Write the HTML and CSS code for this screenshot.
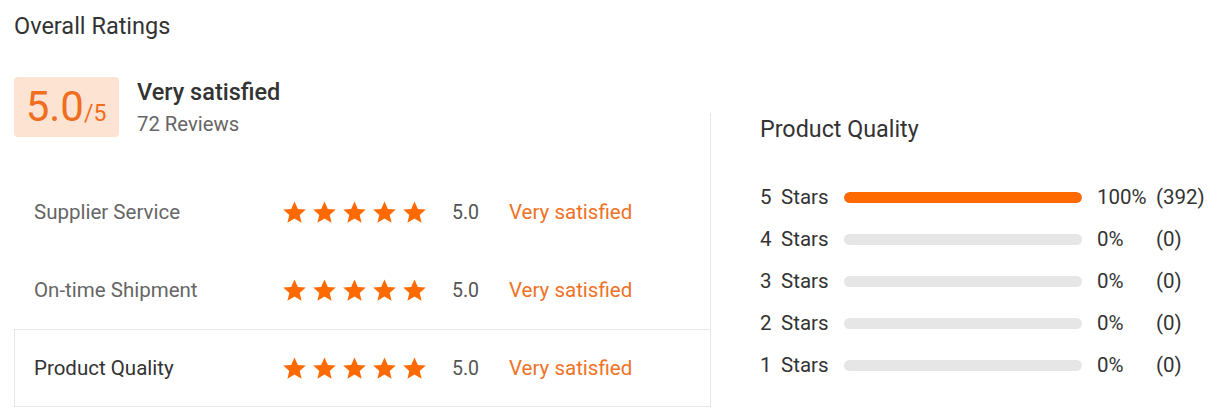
FILE: index.html
```html
<!DOCTYPE html>
<html lang="en">
<head>
    <meta charset="UTF-8">
    <title>Overall Ratings</title>
    <link rel="stylesheet" href="styles.css">
</head>
<body>
    <h2 class="title">Overall Ratings</h2>

    <div class="ratings">
        <div class="left">
            <div class="summary">
                <div class="score"><span class="big">5.0</span><span class="small">/5</span></div>
                <div class="summary-text">
                    <div class="verdict">Very satisfied</div>
                    <div class="reviews">72 Reviews</div>
                </div>
            </div>

            <div class="row">
                <span class="label">Supplier Service</span>
                <span class="stars">
                    <svg viewBox="0 0 24 24"><path d="M12 1.5l3.2 7.2 7.6.5-5.8 5.1 1.8 7.5L12 17.8l-6.8 4 1.8-7.5-5.8-5.1 7.6-.5z"/></svg>
                    <svg viewBox="0 0 24 24"><path d="M12 1.5l3.2 7.2 7.6.5-5.8 5.1 1.8 7.5L12 17.8l-6.8 4 1.8-7.5-5.8-5.1 7.6-.5z"/></svg>
                    <svg viewBox="0 0 24 24"><path d="M12 1.5l3.2 7.2 7.6.5-5.8 5.1 1.8 7.5L12 17.8l-6.8 4 1.8-7.5-5.8-5.1 7.6-.5z"/></svg>
                    <svg viewBox="0 0 24 24"><path d="M12 1.5l3.2 7.2 7.6.5-5.8 5.1 1.8 7.5L12 17.8l-6.8 4 1.8-7.5-5.8-5.1 7.6-.5z"/></svg>
                    <svg viewBox="0 0 24 24"><path d="M12 1.5l3.2 7.2 7.6.5-5.8 5.1 1.8 7.5L12 17.8l-6.8 4 1.8-7.5-5.8-5.1 7.6-.5z"/></svg>
                </span>
                <span class="num">5.0</span>
                <span class="word">Very satisfied</span>
            </div>
            <div class="row">
                <span class="label">On-time Shipment</span>
                <span class="stars">
                    <svg viewBox="0 0 24 24"><path d="M12 1.5l3.2 7.2 7.6.5-5.8 5.1 1.8 7.5L12 17.8l-6.8 4 1.8-7.5-5.8-5.1 7.6-.5z"/></svg>
                    <svg viewBox="0 0 24 24"><path d="M12 1.5l3.2 7.2 7.6.5-5.8 5.1 1.8 7.5L12 17.8l-6.8 4 1.8-7.5-5.8-5.1 7.6-.5z"/></svg>
                    <svg viewBox="0 0 24 24"><path d="M12 1.5l3.2 7.2 7.6.5-5.8 5.1 1.8 7.5L12 17.8l-6.8 4 1.8-7.5-5.8-5.1 7.6-.5z"/></svg>
                    <svg viewBox="0 0 24 24"><path d="M12 1.5l3.2 7.2 7.6.5-5.8 5.1 1.8 7.5L12 17.8l-6.8 4 1.8-7.5-5.8-5.1 7.6-.5z"/></svg>
                    <svg viewBox="0 0 24 24"><path d="M12 1.5l3.2 7.2 7.6.5-5.8 5.1 1.8 7.5L12 17.8l-6.8 4 1.8-7.5-5.8-5.1 7.6-.5z"/></svg>
                </span>
                <span class="num">5.0</span>
                <span class="word">Very satisfied</span>
            </div>
            <div class="row active">
                <span class="label">Product Quality</span>
                <span class="stars">
                    <svg viewBox="0 0 24 24"><path d="M12 1.5l3.2 7.2 7.6.5-5.8 5.1 1.8 7.5L12 17.8l-6.8 4 1.8-7.5-5.8-5.1 7.6-.5z"/></svg>
                    <svg viewBox="0 0 24 24"><path d="M12 1.5l3.2 7.2 7.6.5-5.8 5.1 1.8 7.5L12 17.8l-6.8 4 1.8-7.5-5.8-5.1 7.6-.5z"/></svg>
                    <svg viewBox="0 0 24 24"><path d="M12 1.5l3.2 7.2 7.6.5-5.8 5.1 1.8 7.5L12 17.8l-6.8 4 1.8-7.5-5.8-5.1 7.6-.5z"/></svg>
                    <svg viewBox="0 0 24 24"><path d="M12 1.5l3.2 7.2 7.6.5-5.8 5.1 1.8 7.5L12 17.8l-6.8 4 1.8-7.5-5.8-5.1 7.6-.5z"/></svg>
                    <svg viewBox="0 0 24 24"><path d="M12 1.5l3.2 7.2 7.6.5-5.8 5.1 1.8 7.5L12 17.8l-6.8 4 1.8-7.5-5.8-5.1 7.6-.5z"/></svg>
                </span>
                <span class="num">5.0</span>
                <span class="word">Very satisfied</span>
            </div>
        </div>

        <div class="right">
            <h3 class="sub">Product Quality</h3>
            <div class="dist">
                <span class="n">5</span><span class="st">Stars</span>
                <span class="bar"><span class="fill" style="width:100%"></span></span>
                <span class="pct">100%</span><span class="cnt">(392)</span>
            </div>
            <div class="dist">
                <span class="n">4</span><span class="st">Stars</span>
                <span class="bar"><span class="fill" style="width:0%"></span></span>
                <span class="pct">0%</span><span class="cnt">(0)</span>
            </div>
            <div class="dist">
                <span class="n">3</span><span class="st">Stars</span>
                <span class="bar"><span class="fill" style="width:0%"></span></span>
                <span class="pct">0%</span><span class="cnt">(0)</span>
            </div>
            <div class="dist">
                <span class="n">2</span><span class="st">Stars</span>
                <span class="bar"><span class="fill" style="width:0%"></span></span>
                <span class="pct">0%</span><span class="cnt">(0)</span>
            </div>
            <div class="dist">
                <span class="n">1</span><span class="st">Stars</span>
                <span class="bar"><span class="fill" style="width:0%"></span></span>
                <span class="pct">0%</span><span class="cnt">(0)</span>
            </div>
        </div>
    </div>
</body>
</html>
```

FILE: styles.css
```css
body {
    font-family: Roboto, "Liberation Sans", sans-serif;
    margin: 0;
    padding: 0 14px;
    background-color: #fff;
    color: #333;
}
.title {
    font-size: 23.5px;
    font-weight: normal;
    margin: 0;
    padding-top: 12px;
    line-height: 28px;
    color: #333;
}
.ratings {
    display: flex;
    margin-top: 37px;
}
.left {
    width: 697px;
    flex-shrink: 0;
}
.summary {
    display: flex;
    align-items: flex-start;
    height: 60px;
    margin-bottom: 36px;
}
.score {
    width: 105px;
    height: 60px;
    background-color: #fde3d1;
    border-radius: 4px;
    color: #ef6e1f;
    display: flex;
    align-items: baseline;
    justify-content: center;
    line-height: 60px;
    box-sizing: border-box;
    padding-right: 1px;
}
.score .big {
    font-size: 42px;
}
.score .small {
    font-size: 23px;
}
.summary-text {
    margin-left: 18px;
}
.verdict {
    font-size: 23.5px;
    font-weight: 500;
    line-height: 30px;
    color: #333;
}
.reviews {
    font-size: 20.3px;
    line-height: 28px;
    margin-top: 3px;
    color: #666;
}
.row {
    display: flex;
    align-items: center;
    height: 78px;
    padding-left: 19px;
    box-sizing: border-box;
    border: 1px solid transparent;
    border-right: none;
}
.row.active {
    border-color: #e6e6e6;
    border-right: 1px solid #e6e6e6;
}
.row .label {
    width: 248px;
    font-size: 20.5px;
    color: #666;
}
.row.active .label {
    color: #333;
}
.stars {
    display: flex;
    gap: 5px;
    width: 170px;
}
.stars svg {
    width: 25px;
    height: 25px;
    fill: #ff6a00;
}
.num {
    font-size: 19.5px;
    color: #555;
    width: 57px;
}
.word {
    font-size: 20.5px;
    color: #ef7226;
}
.right {
    flex: 1;
    margin-left: -1px;
    border-left: 1px solid #e6e6e6;
    margin-top: 36px;
    padding-left: 49px;
    padding-bottom: 20px;
}
.sub {
    font-size: 23.3px;
    font-weight: normal;
    color: #333;
    margin: 0;
    padding-top: 1px;
    line-height: 30px;
    height: 62px;
}
.dist {
    display: flex;
    align-items: center;
    height: 42px;
    font-size: 20.5px;
    color: #333;
}
.dist .n {
    width: 21px;
}
.dist .st {
    width: 63px;
}
.bar {
    width: 238px;
    height: 11px;
    border-radius: 6px;
    background-color: #e6e6e6;
    overflow: hidden;
    margin-right: 15px;
}
.fill {
    display: block;
    height: 100%;
    background-color: #ff6a00;
    border-radius: 6px;
}
.pct {
    width: 59px;
}
```
